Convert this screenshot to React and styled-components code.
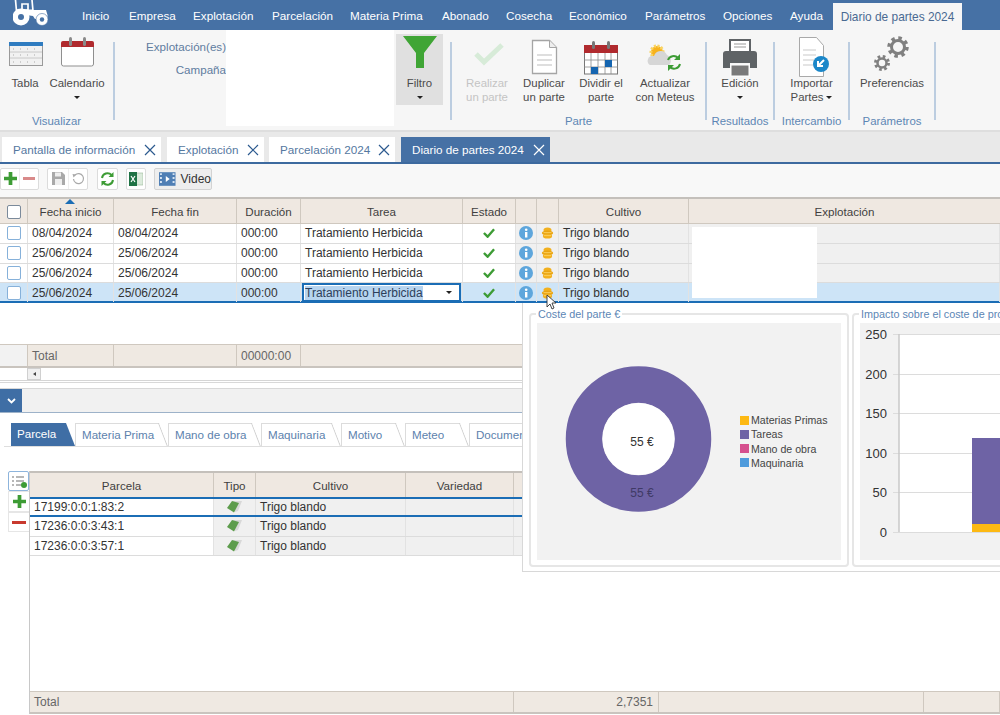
import React from 'react';
import styled, { createGlobalStyle } from 'styled-components';

const Global = createGlobalStyle`
  html, body {
    margin: 0;
    padding: 0;
    background: #fff;
  }
  * {
    box-sizing: border-box;
  }
`;

const Page = styled.div`
  position: relative;
  width: 1000px;
  height: 715px;
  overflow: hidden;
  background: #fff;
  color: #3a3a3a;
  font-family: 'Liberation Sans', Arial, sans-serif;
  font-size: 12.5px;
`;

/* menu */
const MenuBar = styled.div`
  display: flex;
  align-items: flex-end;
  height: 30px;
  padding-left: 13px;
  background: #4671a5;
`;

const MenuItem = styled.div`
  flex: none;
  width: ${(p) => p.$w}px;
  height: 30px;
  line-height: 32px;
  color: #fff;
  font-size: 11.7px;
  white-space: nowrap;
`;

const MenuActive = styled.div`
  flex: none;
  width: 129px;
  height: 27px;
  margin-left: 10px;
  padding-top: 1px;
  line-height: 27px;
  text-align: center;
  background: #f6f6f6;
  color: #4a6a92;
  font-size: 11.9px;
`;

const Logo = styled.svg`
  flex: none;
  width: 35px;
  height: 26px;
  margin-right: 34px;
  margin-bottom: 4px;
`;

/* ribbon */
const Ribbon = styled.div`
  display: flex;
  height: 102px;
  background: #f6f6f6;
  border-bottom: 2px solid #dedede;
`;

const Group = styled.div`
  flex: none;
  display: flex;
  flex-direction: column;
  width: ${(p) => p.$w}px;
  padding: 4px 0 0 ${(p) => p.$pl || 0}px;
`;

const GroupItems = styled.div`
  display: flex;
  height: 71px;
`;

const GroupLabel = styled.div`
  margin: 9px 0 0 ${(p) => (p.$pl ? -p.$pl : 0)}px;
  line-height: 15px;
  text-align: center;
  color: #5d86b4;
  font-size: 11.4px;
`;

const Sep = styled.div`
  flex: none;
  width: 2px;
  height: 78px;
  margin-top: 12px;
  background: #bccde0;
`;

const RibbonBtn = styled.div`
  flex: none;
  width: ${(p) => p.$w}px;
  height: 71px;
  text-align: center;
  line-height: 14px;
  font-size: 11.4px;
  color: ${(p) => (p.$off ? '#c4c4c4' : '#4b4b4b')};
  background: ${(p) => (p.$on ? '#e0e0e0' : 'transparent')};
  white-space: nowrap;
`;

const BtnIcon = styled.svg`
  display: block;
  width: 46px;
  height: 42px;
  margin: 0 auto;
  overflow: visible;
`;

const Caret = styled.span`
  display: inline-block;
  width: 0;
  height: 0;
  margin: ${(p) => p.$m || '0'};
  vertical-align: middle;
  border-left: 3px solid transparent;
  border-right: 3px solid transparent;
  border-top: 3px solid #222;
`;

const FilterLabels = styled.div`
  flex: none;
  width: 111px;
  padding-top: 9px;
  text-align: right;
  line-height: 15px;
  color: #5f7c9f;
  font-size: 11.6px;

  div + div {
    margin-top: 8px;
  }
`;

const Blank = styled.div`
  flex: none;
  width: 168px;
  height: 96px;
  margin-right: 2px;
  background: #fff;
`;

const FilterCol = styled.div`
  flex: none;
  width: 54px;
  padding-top: 4px;
`;

/* document tabs */
const TabStrip = styled.div`
  display: flex;
  align-items: flex-end;
  height: 32px;
  padding-left: 2px;
  background: #e9e9e9;
  border-bottom: 2px solid #3d6a9f;
`;

const DocTab = styled.div`
  flex: none;
  display: flex;
  align-items: center;
  justify-content: space-between;
  width: ${(p) => p.$w}px;
  height: 25px;
  margin-right: ${(p) => p.$mr}px;
  padding: 0 5px 0 11px;
  background: ${(p) => (p.$on ? '#4671a5' : '#fff')};
  color: ${(p) => (p.$on ? '#fff' : '#55789f')};
  font-size: 11.7px;
  white-space: nowrap;
`;

const CloseX = styled.svg`
  flex: none;
  width: 12px;
  height: 12px;
  stroke: ${(p) => (p.$on ? '#fff' : '#2c5a8f')};
  stroke-width: 1.2;
`;

/* toolbar */
const Toolbar = styled.div`
  display: flex;
  align-items: center;
  height: 33px;
  padding: 0 0 4px 0;
  background: #f8f8f8;
`;

const ToolGroup = styled.div`
  flex: none;
  display: flex;
  height: 22px;
  margin-right: ${(p) => p.$mr}px;
  background: #fff;
  border: 1px solid #dcdcdc;
  border-radius: 2px;
`;

const ToolBtn = styled.div`
  flex: none;
  display: flex;
  align-items: center;
  justify-content: center;
  width: ${(p) => p.$w}px;
  & + & {
    border-left: 1px solid #eee;
  }
`;

const VideoBtn = styled.div`
  flex: none;
  display: flex;
  align-items: center;
  gap: 5px;
  width: 58px;
  height: 22px;
  padding-left: 4px;
  background: #eee;
  border: 1px solid #d3d3d3;
  border-radius: 2px;
  color: #333;
  font-size: 12px;
`;

/* grids */
const MAIN_COLS = '28px 86px 123px 64px 162px 53px 21px 22px 130px 1fr';
const SUB_COLS = '184px 42px 150px 108px 1fr';

const GridRow = styled.div`
  display: grid;
  grid-template-columns: ${(p) => p.$cols};
  height: ${(p) => p.$h}px;
  border-bottom: ${(p) => (p.$sel ? '2px solid #1b6db5' : '1px solid #dcdcdc')};
  background: ${(p) => (p.$sel ? '#cde4f7' : 'transparent')};
`;

const HeadRow = styled(GridRow)`
  height: 27px;
  background: #efe8e1;
  border-top: 2px solid #c4c0bb;
  border-bottom: 1px solid #cfc8bf;
`;

const HeadCell = styled.div`
  position: relative;
  display: flex;
  align-items: center;
  justify-content: center;
  padding-top: 1px;
  border-right: 1px solid #cfc8bf;
  color: #3f3f3f;
  font-size: 11.6px;
  &:last-child {
    border-right: 0;
  }
`;

const Cell = styled.div`
  display: flex;
  align-items: center;
  justify-content: ${(p) => (p.$center ? 'center' : 'flex-start')};
  min-width: 0;
  padding: 0 ${(p) => (p.$center ? 0 : 4)}px;
  border-right: 1px solid #e2e2e2;
  background: ${(p) => (p.$grey ? '#f0f0f0' : 'transparent')};
  color: #333;
  font-size: 12px;
  white-space: nowrap;
`;

const SortMark = styled.span`
  position: absolute;
  top: 0;
  left: 37px;
  width: 0;
  height: 0;
  border-left: 5px solid transparent;
  border-right: 5px solid transparent;
  border-bottom: 5px solid #1b6db5;
`;

const Check = styled.span`
  width: 14px;
  height: 14px;
  background: #fff;
  border: 1px solid ${(p) => (p.$head ? '#7b8a9b' : '#86b1da')};
  border-radius: 2px;
`;

const Editor = styled.div`
  flex: none;
  display: flex;
  align-items: center;
  justify-content: space-between;
  width: calc(100% + 6px);
  height: 19px;
  margin-left: -3px;
  padding: 0 7px 0 1px;
  background: #fff;
  border: 2px solid #1b6db5;
`;

const EditorText = styled.span`
  background: #b7d4ef;
  color: #2c3e5a;
`;

const Redact = styled.div`
  position: absolute;
  top: 227px;
  left: 692px;
  width: 125px;
  height: 71px;
  background: #fff;
`;

const Spacer = styled.div`
  height: 41px;
  background: #fff;
`;

const TotalRow = styled.div`
  display: grid;
  grid-template-columns: ${(p) => p.$cols};
  height: ${(p) => p.$h}px;
  background: #efe9e2;
  border-top: 1px solid #cfc8bf;
  border-bottom: 2px solid #c9c4be;
`;

const TotalCell = styled.div`
  display: flex;
  align-items: center;
  justify-content: ${(p) => (p.$right ? 'flex-end' : 'flex-start')};
  padding: 0 5px 0 4px;
  border-right: 1px solid #cfc8bf;
  background: ${(p) => (p.$blank ? '#f2f2f2' : 'transparent')};
  color: #666;
  font-size: 12px;
`;

const ScrollBar = styled.div`
  display: flex;
  height: 13px;
  padding-left: 27px;
  border-bottom: 1px solid #d5d5d5;
`;

const ScrollBtn = styled.div`
  display: flex;
  align-items: center;
  justify-content: center;
  width: 14px;
  background: #f0f0f0;
  border: 1px solid #d0d0d0;
  &::before {
    content: '';
    border-top: 2.5px solid transparent;
    border-bottom: 2.5px solid transparent;
    border-right: 3px solid #444;
  }
`;

const Splitter = styled.div`
  height: 7px;
  margin-top: 1px;
  background: #fff;
  border-top: 1px solid #d8d8d8;
  border-bottom: 1px solid #d8d8d8;
`;

const CollapseBar = styled.div`
  height: 24px;
  background: #f1f1f1;
  border-bottom: 1px solid #9db2c9;
`;

const CollapseBtn = styled.div`
  display: flex;
  align-items: center;
  justify-content: center;
  width: 22px;
  height: 23px;
  background: #3f6ea5;
`;

const SubTabs = styled.div`
  display: flex;
  height: 24px;
  margin: 10px 0 0 4px;
  padding-left: 7px;
  border-bottom: 1px solid #dedede;
`;

const SubTab = styled.div`
  position: relative;
  flex: none;
  width: ${(p) => p.$w}px;
  height: 23px;
  margin-right: ${(p) => p.$mr || 0}px;
  padding-left: 6px;
  line-height: 22px;
  background: ${(p) => (p.$on ? '#3f6ea5' : '#fff')};
  color: ${(p) => (p.$on ? '#fff' : '#5c82ad')};
  font-size: 11.6px;
  white-space: nowrap;
  border-top: ${(p) => (p.$on ? '0' : '1px solid #dcdcdc')};
  border-left: ${(p) => (p.$on ? '0' : '1px solid #dcdcdc')};
  clip-path: polygon(0 0, calc(100% - 9px) 0, 100% 100%, 0 100%);

  &::after {
    content: '';
    position: absolute;
    top: -8px;
    right: 4px;
    width: 1px;
    height: 40px;
    background: ${(p) => (p.$on ? 'transparent' : '#d0d0d0')};
    transform: rotate(-21deg);
  }
`;

const SubArea = styled.div`
  display: flex;
  height: 243px;
  margin-top: 24px;
`;

const SideTools = styled.div`
  flex: none;
  width: 29px;
  padding: 0 0 0 8px;
`;

const SideBtn = styled.div`
  display: flex;
  align-items: center;
  justify-content: center;
  width: 21px;
  height: ${(p) => p.$h}px;
  background: #fff;
  border: 1px solid ${(p) => (p.$on ? '#8db4dc' : '#e6e6e6')};
  border-right: ${(p) => (p.$on ? '1px solid #8db4dc' : '0')};
  border-radius: ${(p) => (p.$on ? '2px' : '0')};
`;

const SubGrid = styled.div`
  flex: 1;
  display: flex;
  flex-direction: column;
  min-width: 0;
  border-left: 1px solid #c8c8c8;
`;

const SubHead = styled(HeadRow)`
  height: 26px;
  border-bottom: 0;
`;

const SubRow = styled.div`
  display: grid;
  grid-template-columns: ${SUB_COLS};
  height: ${(p) => (p.$sel ? 20 : 19.6)}px;
  border-top: ${(p) => (p.$sel ? '2px solid #1b6db5' : '0')};
  border-bottom: ${(p) => (p.$sel ? '2px solid #1b6db5' : '1px solid #dcdcdc')};
`;

const SubFill = styled.div`
  flex: 1;
`;

/* cost popover */
const Popover = styled.div`
  position: absolute;
  top: 303px;
  left: 522px;
  display: flex;
  gap: 3px;
  width: 478px;
  height: 269px;
  padding: 5px 0 0 6px;
  overflow: hidden;
  background: #fff;
  border-left: 1px solid #d8d8d8;
  border-bottom: 1px solid #d8d8d8;
`;

const Panel = styled.fieldset`
  flex: none;
  width: ${(p) => p.$w}px;
  height: 259px;
  margin: 0;
  padding: 3px 6px 5px;
  border: 2px solid #e6e6e6;
  border-radius: 4px;
`;

const PanelTitle = styled.legend`
  margin-left: -1px;
  padding: 0 2px;
  line-height: 12px;
  color: #5c86b5;
  font-size: 10.8px;
  white-space: nowrap;
`;

const Plot = styled.div`
  display: flex;
  align-items: center;
  height: 237px;
  background: #f2f2f2;
`;

const DonutSvg = styled.svg`
  flex: none;
  width: 203px;
  height: 237px;
`;

const Legend = styled.div`
  display: flex;
  flex-direction: column;
  gap: 0;
`;

const LegendRow = styled.div`
  display: flex;
  align-items: center;
  gap: 2px;
  height: 14.3px;
  color: #444;
  font-size: 10.6px;
  white-space: nowrap;
`;

const Swatch = styled.span`
  width: 9px;
  height: 9px;
  background: ${(p) => p.$c};
`;

const BarSvg = styled.svg`
  flex: none;
  width: 300px;
  height: 237px;
`;

const Pointer = styled.svg`
  position: absolute;
  top: 294px;
  left: 546px;
  width: 11px;
  height: 16px;
`;

const Plus = ({ size = 13 }) => (
  <svg width={size} height={size} viewBox="0 0 14 14">
    <path d="M5 0h4v5h5v4H9v5H5V9H0V5h5z" fill="#3d9c35" />
  </svg>
);

const Minus = ({ w = 12, c = '#d98a8a' }) => (
  <svg width={w} height="3" viewBox="0 0 14 3" preserveAspectRatio="none">
    <rect width="14" height="3" fill={c} />
  </svg>
);

const Tick = () => (
  <svg width="12" height="10" viewBox="0 0 13 10">
    <path d="M1 5l4 4 7-8" fill="none" stroke="#3d9c35" strokeWidth="2.6" />
  </svg>
);

const Info = () => (
  <svg width="14" height="14" viewBox="0 0 14 14">
    <circle cx="7" cy="7" r="7" fill="#5ea6dc" />
    <rect x="6" y="6" width="2.4" height="5.5" fill="#fff" />
    <circle cx="7.2" cy="3.8" r="1.3" fill="#fff" />
  </svg>
);

const Coins = () => (
  <svg width="13" height="12" viewBox="0 0 12 12">
    <ellipse cx="6" cy="3" rx="4" ry="2.6" fill="#f2b01e" />
    <ellipse cx="6" cy="6" rx="5.6" ry="2.6" fill="#e9a412" />
    <ellipse cx="6" cy="9" rx="4.6" ry="2.6" fill="#f2b01e" />
    <path d="M2 5.6h8M2.5 8.6h7" stroke="#fbd469" strokeWidth=".8" />
  </svg>
);

const Leaf = () => (
  <svg width="15" height="12" viewBox="0 0 15 12">
    <path d="M6 0h9l-4 10-3 1z" fill="#d8d8d8" />
    <path d="M5 0l7 2-5 9.500L0 7z" fill="#5d9c4c" />
  </svg>
);

const X = ({ on }) => (
  <CloseX $on={on} viewBox="0 0 12 12">
    <path d="M1 1l10 10M11 1L1 11" />
  </CloseX>
);

const Calendar = ({ split }) => (
  <BtnIcon viewBox="0 0 46 42">
    {split ? (
      <>
        <rect x="6.5" y="12" width="33" height="28" fill="#fff" stroke="#777" />
        <rect x="6" y="11" width="34" height="8" fill="#b02a2e" />
        <path d="M13 19v21M20 19v21M27 19v21M33 19v21M6 26h34M6 33h34" stroke="#8a8a8a" strokeWidth=".8" />
        <rect x="13" y="33" width="7" height="7" fill="#1565b0" />
        <rect x="27" y="26" width="7" height="7" fill="#1565b0" />
        <rect x="14" y="7" width="3" height="8" rx="1.5" fill="#777" />
        <rect x="29" y="7" width="3" height="8" rx="1.5" fill="#777" />
      </>
    ) : (
      <>
        <rect x="7.5" y="8" width="32" height="24" rx="2" fill="#fff" stroke="#8f8f8f" />
        <path d="M7 13V9a2 2 0 012-2h29a2 2 0 012 2v4z" fill="#b02a2e" />
        <rect x="15" y="3" width="3" height="9" rx="1.5" fill="#8a8a8a" />
        <rect x="29" y="3" width="3" height="9" rx="1.5" fill="#8a8a8a" />
      </>
    )}
  </BtnIcon>
);

const MENU = [
  ['Inicio', 47],
  ['Empresa', 64],
  ['Explotación', 79],
  ['Parcelación', 78],
  ['Materia Prima', 92],
  ['Abonado', 64],
  ['Cosecha', 63],
  ['Económico', 76],
  ['Parámetros', 78],
  ['Opciones', 67],
  ['Ayuda', 33],
];

const ROWS = [
  ['08/04/2024', '08/04/2024'],
  ['25/06/2024', '25/06/2024'],
  ['25/06/2024', '25/06/2024'],
  ['25/06/2024', '25/06/2024'],
];

const PARCELAS = ['17199:0:0:1:83:2', '17236:0:0:3:43:1', '17236:0:0:3:57:1'];

const LEGEND = [
  ['Materias Primas', '#fdb913'],
  ['Tareas', '#6e63a5'],
  ['Mano de obra', '#d6508e'],
  ['Maquinaria', '#4f9bdc'],
];

const TICKS = [
  ['250', 11],
  ['200', 51],
  ['150', 90],
  ['100', 130],
  ['50', 169],
  ['0', 209],
];

const App = () => (
  <Page>
    <Global />
    <MenuBar>
      <Logo viewBox="0 0 35 26">
        <path d="M2.500 0l1 11M19 0l1 11M9 4h6v6H9z" fill="none" stroke="#fff" strokeWidth="1.700" />
        <path d="M3 9.500h17L20 10h13l1.500 5v4H22l-2-3-14-2-3-1z" fill="#fff" />
        <circle cx="8" cy="17" r="8.500" fill="#fff" />
        <circle cx="8" cy="17" r="3" fill="#4671a5" />
        <circle cx="29" cy="19.500" r="6" fill="#fff" stroke="#4671a5" strokeWidth=".6" />
        <circle cx="29" cy="19.500" r="2.200" fill="#4671a5" />
      </Logo>
      {MENU.map(([label, w]) => (
        <MenuItem key={label} $w={w}>
          {label}
        </MenuItem>
      ))}
      <MenuActive>Diario de partes 2024</MenuActive>
    </MenuBar>

    <Ribbon>
      <Group $w={113} $pl={3}>
        <GroupItems>
          <RibbonBtn $w={44}>
            <BtnIcon viewBox="0 0 46 42">
              <rect x="6.5" y="8.5" width="33" height="23" fill="#f1f1f1" stroke="#9a9a9a" />
              <rect x="6" y="8" width="34" height="4" fill="#2f7cc0" />
              <path d="M7 18h32M7 24h32" stroke="#c8c8c8" />
              <path d="M10 15h27M10 21h27M10 28h27" stroke="#a9a9a9" strokeDasharray="1 6" />
            </BtnIcon>
            Tabla
          </RibbonBtn>
          <RibbonBtn $w={60}>
            <Calendar />
            Calendario
            <br />
            <Caret />
          </RibbonBtn>
        </GroupItems>
        <GroupLabel $pl={3}>Visualizar</GroupLabel>
      </Group>
      <Sep />
      <FilterLabels>
        <div>Explotación(es)</div>
        <div>Campaña</div>
      </FilterLabels>
      <Blank />
      <FilterCol>
        <RibbonBtn $w={47} $on>
          <BtnIcon viewBox="0 0 46 42">
            <path d="M6 2h34L27 19v15h-8V19z" fill="#3fa535" />
          </BtnIcon>
          Filtro
          <br />
          <Caret />
        </RibbonBtn>
      </FilterCol>
      <Sep />
      <Group $w={253} $pl={7}>
        <GroupItems>
          <RibbonBtn $w={56} $off>
            <BtnIcon viewBox="0 0 46 42">
              <path d="M12 20l8 8 18-17" fill="none" stroke="#d7ebd8" strokeWidth="5" />
            </BtnIcon>
            Realizar
            <br />
            un parte
          </RibbonBtn>
          <RibbonBtn $w={58}>
            <BtnIcon viewBox="0 0 46 42">
              <path d="M11.500 6.500h17l7 7v26h-24z" fill="#fff" stroke="#a5a5a5" strokeWidth="1.300" />
              <path d="M28.500 6.500v7h7" fill="#eee" stroke="#a5a5a5" />
              <path d="M16 21h15M16 26h15M16 31h15" stroke="#bdbdbd" />
            </BtnIcon>
            Duplicar
            <br />
            un parte
          </RibbonBtn>
          <RibbonBtn $w={56}>
            <Calendar split />
            Dividir el
            <br />
            parte
          </RibbonBtn>
          <RibbonBtn $w={72}>
            <BtnIcon viewBox="0 0 46 42">
              <circle cx="15" cy="18" r="6" fill="#f7b21b" stroke="#f9d361" strokeWidth="3" strokeDasharray="2 1.500" />
              <path d="M8 31a5 5 0 011-9h3a7 7 0 0113-1 6 6 0 012 10z" fill="#d6d6d6" />
              <path d="M26 26a6 6 0 0110-2M38 30a6 6 0 01-10 3" fill="none" stroke="#3d9c35" strokeWidth="2" />
              <path d="M38 20v6h-6M26 37v-6h6" fill="#3d9c35" />
            </BtnIcon>
            Actualizar
            <br />
            con Meteus
          </RibbonBtn>
        </GroupItems>
        <GroupLabel $pl={7}>Parte</GroupLabel>
      </Group>
      <Sep />
      <Group $w={66}>
        <GroupItems>
          <RibbonBtn $w={66}>
            <BtnIcon viewBox="0 0 46 42">
              <path d="M13 6h20v12H13z" fill="#fff" stroke="#5f6366" strokeWidth="2" />
              <path d="M17 10h12M17 13h12" stroke="#999" />
              <path d="M9 17h28a3 3 0 013 3v14h-7v-5H13v5H6V20a3 3 0 013-3z" fill="#5f6366" />
              <rect x="14" y="31" width="18" height="11" fill="#7a7a7a" stroke="#fff" />
            </BtnIcon>
            Edición
            <br />
            <Caret />
          </RibbonBtn>
        </GroupItems>
        <GroupLabel>Resultados</GroupLabel>
      </Group>
      <Sep />
      <Group $w={73}>
        <GroupItems>
          <RibbonBtn $w={73}>
            <BtnIcon viewBox="0 0 46 42">
              <path d="M10.500 3.500h17l7 8v31h-24z" fill="#fff" stroke="#a9a9a9" />
              <path d="M14 16h13M14 21h13M14 26h11M14 31h11" stroke="#c9c9c9" />
              <circle cx="32" cy="30" r="8" fill="#1b87c9" />
              <path d="M35 26l-6 6M29 27v5h5" fill="none" stroke="#fff" strokeWidth="2" />
            </BtnIcon>
            Importar
            <br />
            Partes
            <Caret $m="0 0 0 3px" />
          </RibbonBtn>
        </GroupItems>
        <GroupLabel>Intercambio</GroupLabel>
      </Group>
      <Sep />
      <Group $w={84}>
        <GroupItems>
          <RibbonBtn $w={84}>
            <BtnIcon viewBox="0 0 46 42">
              <circle cx="29" cy="13" r="6.500" fill="none" stroke="#808080" strokeWidth="3" />
              <circle cx="29" cy="13" r="9" fill="none" stroke="#808080" strokeWidth="3.500" strokeDasharray="3.500 3.570" />
              <circle cx="13" cy="29" r="4.500" fill="none" stroke="#808080" strokeWidth="2.500" />
              <circle cx="13" cy="29" r="6.500" fill="none" stroke="#808080" strokeWidth="3" strokeDasharray="2.600 2.500" />
            </BtnIcon>
            Preferencias
          </RibbonBtn>
        </GroupItems>
        <GroupLabel>Parámetros</GroupLabel>
      </Group>
      <Sep />
    </Ribbon>

    <TabStrip>
      <DocTab $w={159} $mr={6}>
        Pantalla de información
        <X />
      </DocTab>
      <DocTab $w={97} $mr={5}>
        Explotación
        <X />
      </DocTab>
      <DocTab $w={126} $mr={6}>
        Parcelación 2024
        <X />
      </DocTab>
      <DocTab $w={149} $mr={0} $on>
        Diario de partes 2024
        <X on />
      </DocTab>
    </TabStrip>

    <Toolbar>
      <ToolGroup $mr={8}>
        <ToolBtn $w={18}>
          <Plus />
        </ToolBtn>
        <ToolBtn $w={19}>
          <Minus />
        </ToolBtn>
      </ToolGroup>
      <ToolGroup $mr={9}>
        <ToolBtn $w={20}>
          <svg width="13" height="13" viewBox="0 0 13 13">
            <path d="M0 0h10l3 3v10H0z" fill="#a9a9a9" />
            <rect x="3" y="0.500" width="6" height="4" fill="#eee" />
            <rect x="3" y="7" width="7" height="6" fill="#eee" />
          </svg>
        </ToolBtn>
        <ToolBtn $w={19}>
          <svg width="13" height="13" viewBox="0 0 13 13">
            <path d="M3 3a5 5 0 11-1.500 4" fill="none" stroke="#a9a9a9" strokeWidth="1.200" />
            <path d="M0.500 2l4 .5-3 3z" fill="#a9a9a9" />
          </svg>
        </ToolBtn>
      </ToolGroup>
      <ToolGroup $mr={8}>
        <ToolBtn $w={19}>
          <svg width="15" height="14" viewBox="0 0 15 14">
            <path d="M2 6a5.500 5.500 0 019.500-3M13 8a5.500 5.500 0 01-9.500 3" fill="none" stroke="#3d9c35" strokeWidth="2" />
            <path d="M13.500 0v5h-5zM1.500 14V9h5z" fill="#3d9c35" />
          </svg>
        </ToolBtn>
      </ToolGroup>
      <ToolGroup $mr={8}>
        <ToolBtn $w={18}>
          <svg width="14" height="14" viewBox="0 0 14 14">
            <rect x="5" y="1" width="9" height="12" fill="#dcebdc" stroke="#9bb89b" strokeWidth=".6" />
            <rect x="0" y="0" width="8" height="14" fill="#1f7244" />
            <path d="M2 4l4 6M6 4l-4 6" stroke="#fff" strokeWidth="1.200" />
          </svg>
        </ToolBtn>
      </ToolGroup>
      <VideoBtn>
        <svg width="17" height="14" viewBox="0 0 17 14">
          <rect width="17" height="14" fill="#4f7fb5" />
          <path d="M1 1h2v2H1zM1 5h2v2H1zM1 9h2v2H1zM14 1h2v2h-2zM14 5h2v2h-2zM14 9h2v2h-2z" fill="#d5e3f2" />
          <path d="M7 4l4 3-4 3z" fill="#fff" />
        </svg>
        Video
      </VideoBtn>
    </Toolbar>

    <HeadRow $cols={MAIN_COLS}>
      <HeadCell>
        <Check $head />
      </HeadCell>
      <HeadCell>
        <SortMark />
        Fecha inicio
      </HeadCell>
      <HeadCell>Fecha fin</HeadCell>
      <HeadCell>Duración</HeadCell>
      <HeadCell>Tarea</HeadCell>
      <HeadCell>Estado</HeadCell>
      <HeadCell />
      <HeadCell />
      <HeadCell>Cultivo</HeadCell>
      <HeadCell>Explotación</HeadCell>
    </HeadRow>
    {ROWS.map(([start, end], i) => {
      const sel = i === ROWS.length - 1;
      return (
        <GridRow key={i} $cols={MAIN_COLS} $h={19.75} $sel={sel}>
          <Cell $center>
            <Check />
          </Cell>
          <Cell>{start}</Cell>
          <Cell>{end}</Cell>
          <Cell>000:00</Cell>
          <Cell>
            {sel ? (
              <Editor>
                <EditorText>Tratamiento Herbicida</EditorText>
                <Caret />
              </Editor>
            ) : (
              'Tratamiento Herbicida'
            )}
          </Cell>
          <Cell $center>
            <Tick />
          </Cell>
          <Cell $center $grey={!sel}>
            <Info />
          </Cell>
          <Cell $center $grey={!sel}>
            <Coins />
          </Cell>
          <Cell $grey={!sel}>Trigo blando</Cell>
          <Cell $grey={!sel} />
        </GridRow>
      );
    })}
    <Redact />
    <Spacer />
    <TotalRow $cols="28px 86px 123px 64px 1fr" $h={24}>
      <TotalCell $blank />
      <TotalCell>Total</TotalCell>
      <TotalCell />
      <TotalCell>00000:00</TotalCell>
      <TotalCell />
    </TotalRow>
    <ScrollBar>
      <ScrollBtn />
    </ScrollBar>
    <Splitter />
    <CollapseBar>
      <CollapseBtn>
        <svg width="9" height="6" viewBox="0 0 9 6">
          <path d="M1 1l3.500 3.500L8 1" fill="none" stroke="#fff" strokeWidth="1.800" />
        </svg>
      </CollapseBtn>
    </CollapseBar>

    <SubTabs>
      <SubTab $w={64} $on>
        Parcela
      </SubTab>
      <SubTab $w={93}>Materia Prima</SubTab>
      <SubTab $w={93}>Mano de obra</SubTab>
      <SubTab $w={80}>Maquinaria</SubTab>
      <SubTab $w={64}>Motivo</SubTab>
      <SubTab $w={64}>Meteo</SubTab>
      <SubTab $w={70}>Documentos</SubTab>
    </SubTabs>

    <SubArea>
      <SideTools>
        <SideBtn $h={20} $on>
          <svg width="16" height="13" viewBox="0 0 16 13">
            <path d="M1 2h2M5 2h8M1 6h2M5 6h8M1 10h2M5 10h5" stroke="#a0a0a0" strokeWidth="1.300" />
            <circle cx="13" cy="10" r="3" fill="#3d9c35" />
          </svg>
        </SideBtn>
        <SideBtn $h={21}>
          <Plus />
        </SideBtn>
        <SideBtn $h={20}>
          <Minus w={14} c="#c8392e" />
        </SideBtn>
      </SideTools>
      <SubGrid>
        <SubHead $cols={SUB_COLS}>
          <HeadCell>Parcela</HeadCell>
          <HeadCell>Tipo</HeadCell>
          <HeadCell>Cultivo</HeadCell>
          <HeadCell>Variedad</HeadCell>
          <HeadCell />
        </SubHead>
        {PARCELAS.map((code, i) => (
          <SubRow key={code} $sel={i === 0}>
            <Cell>{code}</Cell>
            <Cell $center $grey>
              <Leaf />
            </Cell>
            <Cell $grey>Trigo blando</Cell>
            <Cell $grey />
            <Cell $grey />
          </SubRow>
        ))}
        <SubFill />
        <TotalRow $cols="484px 145px 265px 1fr" $h={23}>
          <TotalCell>Total</TotalCell>
          <TotalCell $right>2,7351</TotalCell>
          <TotalCell />
          <TotalCell />
        </TotalRow>
      </SubGrid>
    </SubArea>

    <Popover>
      <Panel $w={320}>
        <PanelTitle>Coste del parte €</PanelTitle>
        <Plot>
          <DonutSvg viewBox="0 0 203 237">
            <circle cx="101.500" cy="116" r="54.500" fill="none" stroke="#6e63a5" strokeWidth="36.500" />
            <circle cx="101.500" cy="116" r="36" fill="#fff" />
            <text x="105" y="123" textAnchor="middle" fontSize="12" fill="#333">55 €</text>
            <text x="105" y="174" textAnchor="middle" fontSize="12" fill="#3f3a66">55 €</text>
          </DonutSvg>
          <Legend>
            {LEGEND.map(([label, color]) => (
              <LegendRow key={label}>
                <Swatch $c={color} />
                {label}
              </LegendRow>
            ))}
          </Legend>
        </Plot>
      </Panel>
      <Panel $w={320}>
        <PanelTitle>Impacto sobre el coste de producción</PanelTitle>
        <BarSvg viewBox="0 0 300 237">
          <rect width="300" height="237" fill="#f2f2f2" />
          <rect x="39" y="11" width="261" height="198" fill="#fff" />
          {TICKS.map(([label, y]) => (
            <g key={label}>
              <path d={`M33 ${y + 0.5}H300`} stroke="#dcdcdc" />
              <text x="27" y={y + 5} textAnchor="end" fontSize="13" fill="#333">
                {label}
              </text>
            </g>
          ))}
          <rect x="112" y="115" width="100" height="86" fill="#6e63a5" />
          <rect x="112" y="201" width="100" height="8" fill="#fdb913" />
          <path d="M39 11V209" stroke="#c8c8c8" strokeWidth="1.500" />
        </BarSvg>
      </Panel>
    </Popover>

    <Pointer viewBox="0 0 11 16">
      <path d="M1 1v12l3-3 2 5 2-1-2-5h4z" fill="#fff" stroke="#333" strokeWidth=".9" />
    </Pointer>
  </Page>
);

export default App;
